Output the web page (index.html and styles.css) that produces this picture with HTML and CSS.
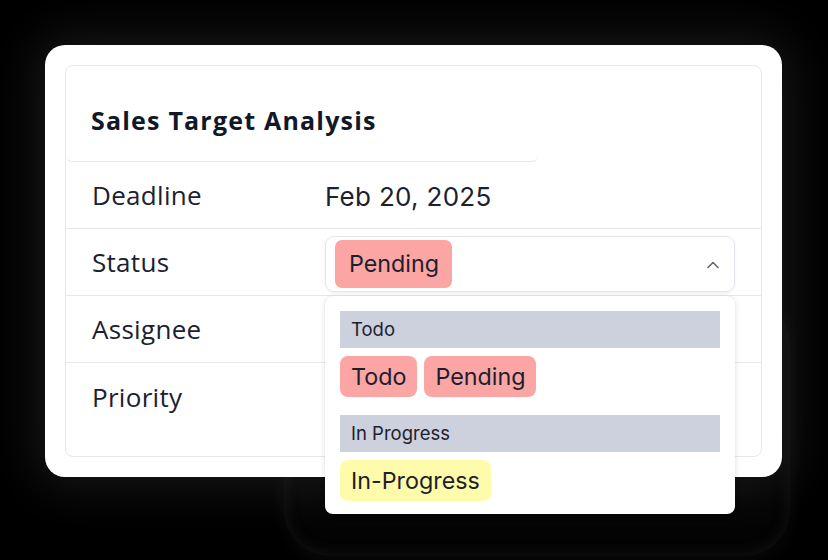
FILE: index.html
```html
<!DOCTYPE html>
<html>
<head>
<meta charset="utf-8">
<link rel="stylesheet" href="styles.css">
</head>
<body>
<div class="stage">
  <div class="backdrop"></div>
  <div class="card">
    <div class="panel">
      <div class="head"><h1 class="title">Sales Target Analysis</h1></div>
      <div class="row">
        <div class="label">Deadline</div>
        <div class="value">Feb 20, 2025</div>
      </div>
      <div class="row">
        <div class="label">Status</div>
        <div class="value">
          <div class="select">
            <span class="chip pink">Pending</span>
            <svg class="chev" width="14" height="9" viewBox="0 0 14 9"><path d="M2 7.5 L7 2.5 L12 7.5" fill="none" stroke="#666" stroke-width="1.6" stroke-linecap="round" stroke-linejoin="round"/></svg>
            <div class="menu">
              <div class="group">Todo</div>
              <div class="chips">
                <span class="chip pink">Todo</span>
                <span class="chip pink">Pending</span>
              </div>
              <div class="group second">In Progress</div>
              <div class="chips">
                <span class="chip yellow">In-Progress</span>
              </div>
            </div>
          </div>
        </div>
      </div>
      <div class="row">
        <div class="label">Assignee</div>
        <div class="value"></div>
      </div>
      <div class="row last">
        <div class="label">Priority</div>
        <div class="value"></div>
      </div>
    </div>
  </div>
</div>
</body>
</html>
```
FILE: styles.css
```css
html, body {
  margin: 0;
  padding: 0;
  background: #000;
  width: 828px;
  height: 560px;
  overflow: hidden;
}
.stage {
  position: relative;
  width: 828px;
  height: 560px;
  padding: 45px 0 0 45px;
  box-sizing: border-box;
}
.backdrop {
  position: absolute;
  left: 284px;
  top: 300px;
  width: 506px;
  height: 256px;
  border-radius: 46px;
  background: #040404;
  box-shadow: inset 0 0 16px rgba(60, 60, 60, 0.3), 0 0 20px rgba(35, 35, 35, 0.4);
}
.card {
  position: relative;
  width: 737px;
  height: 432px;
  box-sizing: border-box;
  padding: 20px;
  background: #fff;
  border-radius: 20px;
  box-shadow: 0 0 50px 8px rgba(45, 45, 45, 0.55);
}
.panel {
  height: 100%;
  box-sizing: border-box;
  border: 1px solid #e6e8ee;
  border-radius: 8px;
  display: flex;
  flex-direction: column;
  font-family: "Open Sans", "Liberation Sans", sans-serif;
  color: #1b2130;
}
.head {
  width: 472px;
  height: 96px;
  box-sizing: border-box;
  border-bottom: 1px solid #e6e8ee;
  border-radius: 0 0 6px 6px;
  display: flex;
  align-items: center;
  padding-left: 25px;
}
.title {
  margin: 0;
  font-size: 25px;
  font-weight: 700;
  color: #111827;
  letter-spacing: 1.2px;
  position: relative;
  top: 6px;
}
.row {
  height: 67px;
  box-sizing: border-box;
  border-bottom: 1px solid #e6e8ee;
  display: flex;
  align-items: center;
}
.row.last {
  border-bottom: none;
  height: 68px;
}
.label {
  width: 259px;
  padding-left: 26px;
  box-sizing: border-box;
  font-size: 26px;
  letter-spacing: 0.3px;
  flex: none;
}
.value {
  font-family: Inter, "Liberation Sans", sans-serif;
  font-size: 26px;
  letter-spacing: 0.3px;
  color: #1b2130;
  position: relative;
  top: 1px;
}
.select {
  position: relative;
  width: 410px;
  height: 56px;
  box-sizing: border-box;
  border: 1px solid #e3e6ec;
  border-radius: 9px;
  box-shadow: 0 1px 3px rgba(0, 0, 0, 0.07);
  display: flex;
  align-items: center;
  padding-left: 9px;
  margin-top: 1px;
  letter-spacing: 0;
}
.chev {
  position: absolute;
  right: 14px;
  top: 23px;
}
.chip {
  display: inline-flex;
  align-items: center;
  height: 48px;
  padding: 0 13px 0 14px;
  box-sizing: border-box;
  border-radius: 7px;
  font-family: Inter, "Liberation Sans", sans-serif;
  font-size: 23.3px;
  color: #1e1e2c;
}
.pink { background: #fca5a5; }
.yellow { background: #fefcaa; }
.menu {
  position: absolute;
  left: -1px;
  top: 59px;
  width: 410px;
  box-sizing: border-box;
  padding: 15px 15px 13px 15px;
  background: #fff;
  border-radius: 8px;
  box-shadow: 0 2px 6px rgba(0, 0, 0, 0.12), 0 0 1px rgba(0, 0, 0, 0.15);
  z-index: 2;
}
.group {
  height: 37px;
  background: #cdd0dd;
  display: flex;
  align-items: center;
  padding-left: 11px;
  font-size: 18.5px;
  color: #1e2130;
}
.group.second { margin-top: 18px; }
.chips {
  display: flex;
  gap: 7px;
  margin-top: 8px;
}
.chips .chip {
  height: 41px;
  padding: 0 11px;
  border-radius: 8px;
}
```
